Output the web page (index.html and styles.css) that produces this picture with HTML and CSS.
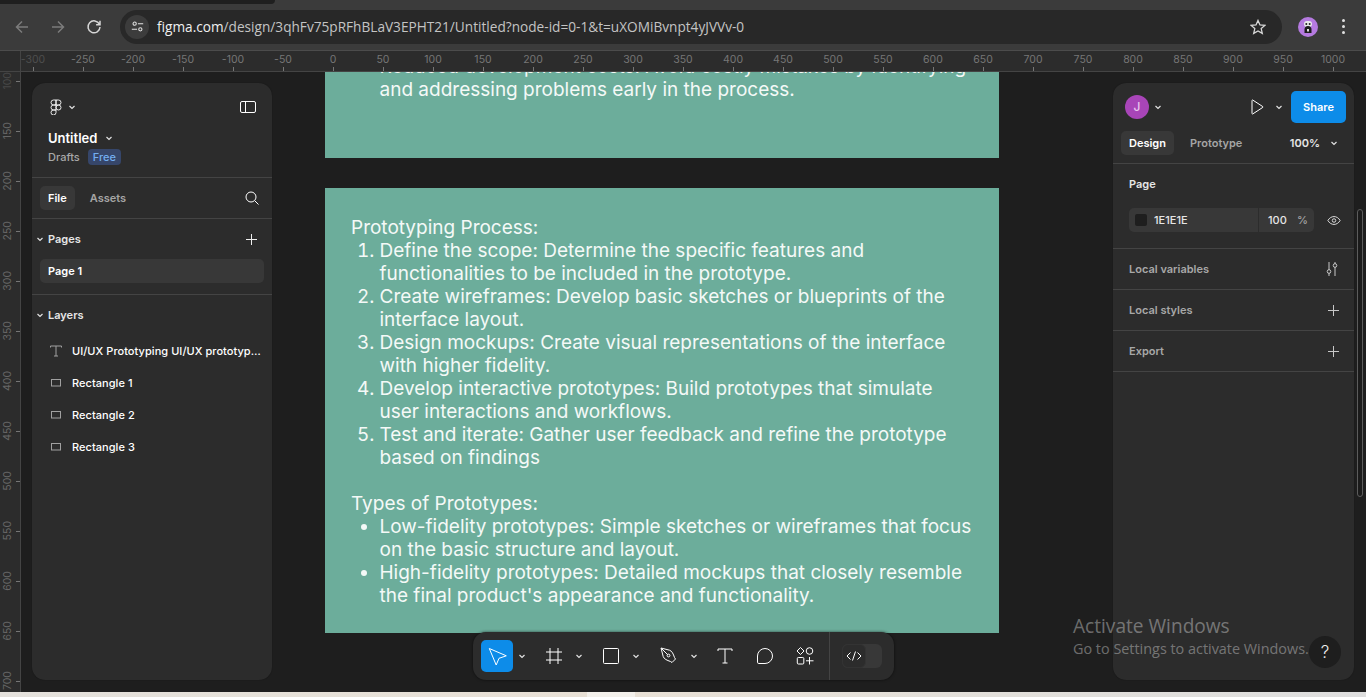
FILE: index.html
```html
<!DOCTYPE html>
<html lang="en">
<head>
    <meta charset="utf-8">
    <title>Untitled - Figma</title>
    <link rel="stylesheet" href="styles.css">
</head>
<body>
    <div class="tabstrip"><div class="tab-edge"></div></div>

    <!-- Browser toolbar -->
    <div class="chrome">
        <svg class="nav-icon dim" viewBox="0 0 16 16"><path d="M14 8H2.5M8 2.5 2.5 8 8 13.5"/></svg>
        <svg class="nav-icon dim" viewBox="0 0 16 16"><path d="M2 8h11.5M8 2.5 13.5 8 8 13.5"/></svg>
        <svg class="nav-icon" viewBox="0 0 16 16"><path d="M13.4 5.2A6 6 0 1 0 14 8M14 1.8v3.9h-3.9"/></svg>
        <div class="omnibox">
            <div class="site-btn">
                <svg viewBox="0 0 16 16"><circle cx="4.5" cy="4.5" r="2"/><path d="M8.5 4.5H15M1 11.5h6.5"/><circle cx="11.5" cy="11.5" r="2"/></svg>
            </div>
            <span class="url"><span class="url-host">figma.com</span>/design/3qhFv75pRFhBLaV3EPHT21/Untitled?node-id=0-1&amp;t=uXOMiBvnpt4yJVVv-0</span>
            <svg class="star" viewBox="0 0 16 16"><path d="m8 1.4 2 4.5 4.9.5-3.7 3.2 1.1 4.8L8 11.9l-4.3 2.5 1.1-4.8L1.1 6.4 6 5.900z"/></svg>
        </div>
        <div class="profile">
            <svg viewBox="0 0 20 20"><circle cx="10" cy="10" r="10" fill="#b57ae0" stroke="none"/><rect x="6" y="4" width="8" height="6" rx="3" fill="#e8e8e8" stroke="none"/><circle cx="8.3" cy="7" r="1" fill="#222" stroke="none"/><circle cx="11.7" cy="7" r="1" fill="#222" stroke="none"/><path d="M6.5 16v-3.5a3.5 3.5 0 0 1 7 0V16z" fill="#1c1c1c" stroke="none"/><rect x="9" y="12" width="2" height="2.5" fill="#ddd" stroke="none"/></svg>
        </div>
        <div class="kebab"><i></i><i></i><i></i></div>
    </div>

    <div class="workspace">
        <div class="ruler-x">
            <div class="ruler-corner"></div>
            <div class="ruler-x-clip">
                <div class="ruler-x-track">
                    <span class="tick-x faint">-300</span>
                    <span class="tick-x">-250</span>
                    <span class="tick-x">-200</span>
                    <span class="tick-x">-150</span>
                    <span class="tick-x">-100</span>
                    <span class="tick-x">-50</span>
                    <span class="tick-x">0</span>
                    <span class="tick-x">50</span>
                    <span class="tick-x">100</span>
                    <span class="tick-x">150</span>
                    <span class="tick-x">200</span>
                    <span class="tick-x">250</span>
                    <span class="tick-x">300</span>
                    <span class="tick-x">350</span>
                    <span class="tick-x">400</span>
                    <span class="tick-x">450</span>
                    <span class="tick-x">500</span>
                    <span class="tick-x">550</span>
                    <span class="tick-x">600</span>
                    <span class="tick-x">650</span>
                    <span class="tick-x">700</span>
                    <span class="tick-x">750</span>
                    <span class="tick-x">800</span>
                    <span class="tick-x">850</span>
                    <span class="tick-x">900</span>
                    <span class="tick-x">950</span>
                    <span class="tick-x">1000</span>
                </div>
            </div>
        </div>

        <div class="stage">
            <div class="ruler-y">
                <div class="ruler-y-track">
                    <span class="tick-y faint"><b>100</b></span>
                    <span class="tick-y"><b>150</b></span>
                    <span class="tick-y"><b>200</b></span>
                    <span class="tick-y"><b>250</b></span>
                    <span class="tick-y"><b>300</b></span>
                    <span class="tick-y"><b>350</b></span>
                    <span class="tick-y"><b>400</b></span>
                    <span class="tick-y"><b>450</b></span>
                    <span class="tick-y"><b>500</b></span>
                    <span class="tick-y"><b>550</b></span>
                    <span class="tick-y"><b>600</b></span>
                    <span class="tick-y"><b>650</b></span>
                    <span class="tick-y"><b>700</b></span>
                </div>
            </div>

            <!-- Canvas frames -->
            <div class="canvas">
                <div class="frame frame-top">
                    <ul class="frame-list">
                        <li class="no-dot">Reduced development costs: Avoid costly mistakes by identifying and addressing problems early in the process.</li>
                    </ul>
                </div>
                <div class="frame frame-main">
                    <p>Prototyping Process:</p>
                    <ol class="frame-list">
                        <li>Define the scope: Determine the specific features and functionalities to be included in the prototype.</li>
                        <li>Create wireframes: Develop basic sketches or blueprints of the interface layout.</li>
                        <li>Design mockups: Create visual representations of the interface with higher fidelity.</li>
                        <li>Develop interactive prototypes: Build prototypes that simulate user interactions and workflows.</li>
                        <li>Test and iterate: Gather user feedback and refine the prototype based on findings</li>
                    </ol>
                    <p class="gap-above">Types of Prototypes:</p>
                    <ul class="frame-list">
                        <li>Low-fidelity prototypes: Simple sketches or wireframes that focus on the basic structure and layout.</li>
                        <li>High-fidelity prototypes: Detailed mockups that closely resemble the final product's appearance and functionality.</li>
                    </ul>
                </div>
            </div>
        </div>

        <!-- Left panel -->
        <aside class="panel panel-left">
            <div class="file-head">
                <div class="row-between logo-row">
                    <div class="logo-wrap">
                        <svg class="figma-logo" viewBox="0 0 12 16"><path d="M6 1H3.5a2.5 2.5 0 0 0 0 5H6zM6 1h2.5a2.5 2.5 0 0 1 0 5H6zM6 6H3.5a2.5 2.5 0 0 0 0 5H6zM11 8.5a2.5 2.5 0 1 1-5 0 2.5 2.5 0 0 1 5 0zM6 11H3.5A2.5 2.5 0 1 0 6 13.5z"/></svg>
                        <svg class="chev" viewBox="0 0 8 8"><path d="m1.5 3 2.5 2.5L6.5 3"/></svg>
                    </div>
                    <svg class="icon16" viewBox="0 0 16 12"><rect x=".5" y=".5" width="15" height="11" rx="1.5"/><path d="M5.5 .5v11"/></svg>
                </div>
                <div class="file-name">Untitled <svg class="chev" viewBox="0 0 8 8"><path d="m1.5 3 2.5 2.5L6.5 3"/></svg></div>
                <div class="file-meta"><span>Drafts</span><span class="badge">Free</span></div>
            </div>
            <div class="tabs-row row-between">
                <div class="tabs tabs-left">
                    <span class="tab active">File</span>
                    <span class="tab">Assets</span>
                </div>
                <svg class="icon16 search" viewBox="0 0 14 14"><circle cx="6" cy="6" r="5"/><path d="m9.7 9.7 3.800 3.800"/></svg>
            </div>
            <div class="section section-pages">
                <div class="section-head row-between">
                    <span class="section-title"><svg class="chev" viewBox="0 0 8 8"><path d="m1.5 3 2.5 2.5L6.5 3"/></svg>Pages</span>
                    <svg class="plus" viewBox="0 0 11 11"><path d="M5.5 0v11M0 5.5h11"/></svg>
                </div>
                <div class="page-item">Page 1</div>
            </div>
            <div class="layers">
                <div class="section-head row-between">
                    <span class="section-title"><svg class="chev" viewBox="0 0 8 8"><path d="m1.5 3 2.5 2.5L6.5 3"/></svg>Layers</span>
                </div>
                <div class="layer-list">
                    <div class="layer">
                        <svg class="layer-icon" viewBox="0 0 12 12"><path d="M.5 2.5V1h11v1.500M6 1v10M4 11h4"/></svg>
                        <span class="layer-name">UI/UX Prototyping UI/UX prototyping is a crucial step</span>
                    </div>
                    <div class="layer">
                        <svg class="layer-icon" viewBox="0 0 12 12"><rect x="1.5" y="2.5" width="9" height="6.5"/></svg>
                        <span class="layer-name">Rectangle 1</span>
                    </div>
                    <div class="layer">
                        <svg class="layer-icon" viewBox="0 0 12 12"><rect x="1.5" y="2.5" width="9" height="6.5"/></svg>
                        <span class="layer-name">Rectangle 2</span>
                    </div>
                    <div class="layer">
                        <svg class="layer-icon" viewBox="0 0 12 12"><rect x="1.5" y="2.5" width="9" height="6.5"/></svg>
                        <span class="layer-name">Rectangle 3</span>
                    </div>
                </div>
            </div>
        </aside>

        <!-- Right panel -->
        <aside class="panel panel-right">
            <div class="top-row row-between">
                <div class="logo-wrap">
                    <span class="user-dot">J</span>
                    <svg class="chev" viewBox="0 0 8 8"><path d="m1.5 3 2.5 2.5L6.5 3"/></svg>
                </div>
                <div class="share-wrap">
                    <svg class="play" viewBox="0 0 14 16"><path d="M2 1.5v13a.5.5 0 0 0 .8.4l10-6.5a.5.5 0 0 0 0-.8l-10-6.5a.5.5 0 0 0-.8.4z"/></svg>
                    <svg class="chev" viewBox="0 0 8 8"><path d="m1.5 3 2.5 2.5L6.5 3"/></svg>
                    <span class="share-btn">Share</span>
                </div>
            </div>
            <div class="tabs-row-right row-between">
                <div class="tabs">
                    <span class="tab active">Design</span>
                    <span class="tab">Prototype</span>
                </div>
                <div class="zoom-val">100% <svg class="chev" viewBox="0 0 8 8"><path d="m1.5 3 2.5 2.5L6.5 3"/></svg></div>
            </div>
            <div class="page-props">
                <div class="props-title">Page</div>
                <div class="fill-row">
                    <div class="fill-field">
                        <div class="fill-color"><span class="swatch"></span>1E1E1E</div>
                        <div class="fill-opacity"><span>100</span><span class="pct">%</span></div>
                    </div>
                    <svg class="eye" viewBox="0 0 16 12"><path d="M1 6c3.5-6 10.5-6 14 0-3.5 6-10.5 6-14 0z"/><circle cx="8" cy="6" r="2"/></svg>
                </div>
            </div>
            <div class="prop-row row-between">
                <span>Local variables</span>
                <svg class="sliders" viewBox="0 0 14 16"><path d="M4 1v8M4 12v3M10 1v2M10 6v9"/><circle cx="4" cy="10.5" r="1.8"/><circle cx="10" cy="4.5" r="1.8"/></svg>
            </div>
            <div class="prop-row row-between">
                <span>Local styles</span>
                <svg class="plus" viewBox="0 0 11 11"><path d="M5.5 0v11M0 5.5h11"/></svg>
            </div>
            <div class="prop-row row-between">
                <span>Export</span>
                <svg class="plus" viewBox="0 0 11 11"><path d="M5.5 0v11M0 5.5h11"/></svg>
            </div>
        </aside>

        <div class="panel-scroll"></div>

        <!-- Bottom tools -->
        <div class="toolbar">
            <span class="tool tool-on">
                <svg viewBox="0 0 20 20"><path d="M2.3 2.5 19.3 9.8 12 12.3 9.2 19z"/></svg>
            </span>
            <svg class="chev tool-chev" viewBox="0 0 8 8"><path d="m1.5 3 2.5 2.5L6.5 3"/></svg>
            <span class="tool tool-frame">
                <svg viewBox="0 0 20 20"><path d="M6 2v16M14 2v16M2 6h16M2 14h16"/></svg>
            </span>
            <svg class="chev tool-chev" viewBox="0 0 8 8"><path d="m1.5 3 2.5 2.5L6.5 3"/></svg>
            <span class="tool tool-rect">
                <svg viewBox="0 0 20 20"><rect x="2.5" y="2.5" width="15" height="15" rx="1"/></svg>
            </span>
            <svg class="chev tool-chev" viewBox="0 0 8 8"><path d="m1.5 3 2.5 2.5L6.5 3"/></svg>
            <span class="tool tool-pen">
                <svg viewBox="0 0 20 20"><path d="M2 2 10.5 4.2c2.5 .7 3.8 3.8 5 7.3l1 1.5-3.5 3.5-1.5-1c-3.5-1.2-6.600-2.5-7.300-5zM2.3 2.3 8.8 8.8"/><circle cx="9.5" cy="9.5" r="1.4"/></svg>
            </span>
            <svg class="chev tool-chev" viewBox="0 0 8 8"><path d="m1.5 3 2.5 2.5L6.5 3"/></svg>
            <span class="tool tool-text">
                <svg viewBox="0 0 20 20"><path d="M3 5V3h14v2M10 3v14M7.5 17h5"/></svg>
            </span>
            <span class="tool tool-bubble">
                <svg viewBox="0 0 20 20"><path d="M10 2.5a7.5 7.5 0 1 1 0 15H3.8a1.3 1.3 0 0 1-1.300-1.300V10A7.5 7.5 0 0 1 10 2.500z"/></svg>
            </span>
            <span class="tool tool-widgets">
                <svg viewBox="0 0 20 20"><path d="m5.5 1.5 3.5 3.5-3.5 3.5L2 5z"/><circle cx="14.5" cy="5" r="3.3"/><rect x="2.3" y="11.5" width="6.5" height="6.5" rx="1"/><path d="M14.5 11v7.5M11 14.8h7.5"/></svg>
            </span>
            <div class="dev-wrap">
                <div class="dev-toggle">
                    <span class="dev-knob">
                        <svg viewBox="0 0 16 12"><path d="M4.5 2.5 1 6l3.5 3.5M11.5 2.5 15 6l-3.5 3.500M9.500 1.500l-3 9"/></svg>
                    </span>
                </div>
            </div>
        </div>

        <div class="activate">
            <div class="activate-title">Activate Windows</div>
            <div class="activate-sub">Go to Settings to activate Windows.</div>
        </div>
        <div class="help">?</div>
    </div>

    <div class="taskbar-edge"></div>
</body>
</html>
```

FILE: styles.css
```css
* {
    box-sizing: border-box;
}

html, body {
    margin: 0;
    height: 697px;
    overflow: hidden;
}

body {
    background-color: #1e1e1e;
    font-family: "Inter", "Liberation Sans", sans-serif;
    font-size: 11px;
    color: #fff;
}

svg {
    display: block;
    fill: none;
    stroke: currentColor;
    flex: none;
}

.row-between {
    display: flex;
    align-items: center;
    justify-content: space-between;
}

/* Browser */
.tabstrip {
    height: 4px;
    background-color: #3b3b3b;
}

.tab-edge {
    width: 275px;
    height: 4px;
    background-color: #1f1f1f;
    border-bottom-right-radius: 6px;
}

.chrome {
    height: 47px;
    display: flex;
    align-items: center;
    background-color: #3b3b3b;
    border-bottom: 1px solid #4c4c4c;
    padding-left: 14px;
    padding-bottom: 1px;
}

.nav-icon {
    width: 16px;
    height: 16px;
    margin-right: 20px;
    stroke: #d6d6d6;
    stroke-width: 1.5;
}

.nav-icon.dim {
    stroke: #7c7c7c;
}

.omnibox {
    width: 1162px;
    height: 34px;
    margin-left: -2px;
    display: flex;
    align-items: center;
    background-color: #282828;
    border-radius: 17px;
    padding: 0 16px 0 5px;
}

.site-btn {
    width: 24px;
    height: 24px;
    border-radius: 50%;
    background-color: #3c3c3c;
    display: flex;
    align-items: center;
    justify-content: center;
    color: #e4e4e4;
}

.site-btn svg {
    width: 13px;
    height: 13px;
    stroke-width: 1.3;
}

.url {
    flex: 1;
    margin-left: 8px;
    font-family: "Open Sans", "Noto Sans", sans-serif;
    font-size: 13.65px;
    color: #c4c4c4;
    white-space: nowrap;
}

.url-host {
    color: #f0f0f0;
}

.star {
    width: 16px;
    height: 16px;
    color: #d8d8d8;
    stroke-width: 1.3;
}

.profile {
    margin-left: 16px;
    width: 20px;
    height: 20px;
}

.kebab {
    margin-left: 24px;
    display: flex;
    flex-direction: column;
    gap: 3px;
}

.kebab i {
    width: 3px;
    height: 3px;
    border-radius: 50%;
    background-color: #e0e0e0;
}

/* Workspace */
.workspace {
    position: relative;
    height: 641px;
    overflow: hidden;
}

.ruler-x {
    height: 21px;
    display: flex;
    background-color: #2c2c2c;
    border-bottom: 1px solid #444;
}

.ruler-corner {
    width: 21px;
    flex: none;
    border-right: 1px solid #444;
}

.ruler-x-clip {
    flex: 1;
    overflow: hidden;
}

.ruler-x-track {
    display: flex;
    margin-left: -13px;
}

.tick-x {
    width: 50px;
    height: 20px;
    flex: none;
    position: relative;
    text-align: center;
    font-size: 10.5px;
    line-height: 18px;
    color: #767676;
}

.tick-x::after {
    content: "";
    position: absolute;
    left: 25px;
    bottom: 0;
    width: 1px;
    height: 4px;
    background-color: #767676;
}

.faint {
    color: #4e4e4e;
}

.stage {
    display: flex;
    height: 620px;
}

.ruler-y {
    width: 21px;
    flex: none;
    background-color: #2c2c2c;
    border-right: 1px solid #444;
    overflow: hidden;
}

.ruler-y-track {
    margin-top: -16px;
}

.tick-y {
    height: 50px;
    position: relative;
    display: flex;
    align-items: center;
    width: 16px;
    color: #666;
    font-size: 10.5px;
}

.tick-y b {
    font-weight: 400;
    writing-mode: vertical-rl;
    transform: rotate(180deg);
    margin-left: 2px;
    line-height: 12px;
}

.tick-y::after {
    content: "";
    position: absolute;
    left: 16px;
    top: 25px;
    width: 4px;
    height: 1px;
    background-color: #767676;
}

.tick-y.faint {
    color: #484848;
}

.canvas {
    flex: 1;
    padding-left: 304px;
    overflow: hidden;
    background-color: #1e1e1e;
}

.frame {
    width: 674px;
    background-color: #6cad9b;
    color: #f4f9f7;
    font-size: 19px;
    line-height: 23px;
    padding: 0 26px;
}

.frame p {
    margin: 0;
}

.frame-top {
    margin-top: -17px;
    height: 103px;
}

.frame-main {
    margin-top: 30px;
    padding-top: 28px;
    padding-bottom: 26px;
}

.frame-list {
    margin: 0;
    padding-left: 28.5px;
}

.no-dot {
    list-style: none;
}

.frame .gap-above {
    margin-top: 23px;
}

/* Panels */
.panel {
    position: absolute;
    top: 32px;
    height: 597px;
    background-color: #2c2c2c;
    border-radius: 13px;
    box-shadow: 0 0 1px rgba(0, 0, 0, .5);
    font-weight: 500;
}

.panel-left {
    left: 32px;
    width: 240px;
}

.panel-right {
    left: 1113px;
    width: 241px;
}

.file-head {
    height: 95px;
    padding: 14px 16px 0;
    border-bottom: 1px solid #444;
}

.logo-wrap {
    display: flex;
    align-items: center;
    gap: 6px;
}

.logo-row {
    height: 20px;
}

.figma-logo {
    width: 12px;
    height: 16px;
    stroke-width: .9;
    margin-left: 2px;
}

.chev {
    width: 8px;
    height: 8px;
    color: #e2e2e2;
    stroke-width: 1.2;
}

.icon16 {
    width: 16px;
    height: 12px;
    stroke-width: 1;
}

.search {
    width: 14px;
    height: 14px;
}

.file-name {
    margin-top: 13px;
    display: flex;
    align-items: center;
    gap: 8px;
    font-size: 13px;
    font-weight: 600;
    line-height: 16px;
}

.file-meta {
    margin-top: 3px;
    display: flex;
    align-items: center;
    gap: 8px;
    color: #a8a8a8;
}

.badge {
    height: 16px;
    padding: 0 5px;
    line-height: 16px;
    border-radius: 4px;
    background-color: #36466a;
    color: #73aef0;
}

.tabs-row {
    height: 41px;
    padding: 0 13px 0 8px;
    border-bottom: 1px solid #444;
}

.tabs {
    display: flex;
    gap: 8px;
}

.tabs-left {
    gap: 7px;
}

.tab {
    height: 24px;
    line-height: 24px;
    padding: 0 8px;
    border-radius: 5px;
    color: #a5a5a5;
    font-weight: 600;
}

.tab.active {
    background-color: #383838;
    color: #fff;
}

.section-pages {
    height: 76px;
    border-bottom: 1px solid #444;
}

.section-head {
    height: 40px;
    padding: 0 15px 0 4px;
}

.section-title {
    display: flex;
    align-items: center;
    font-weight: 600;
    color: #e6e6e6;
}

.section-title .chev {
    margin-right: 4px;
}

.plus {
    width: 11px;
    height: 11px;
    stroke-width: 1;
    color: #eee;
    shape-rendering: crispEdges;
}

.page-item {
    margin: 0 8px;
    height: 24px;
    line-height: 24px;
    padding-left: 8px;
    border-radius: 5px;
    background-color: #383838;
    font-weight: 600;
}

.layer {
    height: 32px;
    display: flex;
    align-items: center;
    padding-left: 18px;
}

.layer-icon {
    width: 12px;
    height: 12px;
    stroke-width: 1;
    color: #a0a0a0;
}

.layer-name {
    margin-left: 10px;
    width: 189px;
    font-weight: 450;
    letter-spacing: .05px;
    white-space: nowrap;
    overflow: hidden;
    text-overflow: ellipsis;
}

.top-row {
    height: 48px;
    padding: 0 8px 0 12px;
}

.user-dot {
    width: 24px;
    height: 24px;
    border-radius: 50%;
    background-color: #a845b8;
    color: #e8c8ee;
    text-align: center;
    line-height: 24px;
    font-size: 12px;
}

.top-row .logo-wrap {
    gap: 5px;
}

.share-wrap {
    display: flex;
    align-items: center;
}

.play {
    width: 14px;
    height: 16px;
    stroke-width: 1;
}

.share-wrap .chev {
    margin: 0 8px 0 11px;
}

.share-btn {
    width: 55px;
    height: 32px;
    line-height: 32px;
    text-align: center;
    border-radius: 5px;
    background-color: #0d8ce9;
    font-weight: 600;
}

.tabs-row-right {
    height: 33px;
    padding: 0 16px 9px 8px;
    border-bottom: 1px solid #444;
    align-items: center;
}

.zoom-val {
    display: flex;
    align-items: center;
    gap: 10px;
    font-weight: 600;
    color: #e6e6e6;
}

.page-props {
    height: 85px;
    padding: 13px 13px 0 16px;
    border-bottom: 1px solid #444;
}

.props-title {
    font-weight: 600;
    color: #e6e6e6;
    line-height: 14px;
}

.fill-row {
    margin-top: 17px;
    display: flex;
    align-items: center;
    justify-content: space-between;
}

.fill-field {
    width: 185px;
    height: 24px;
    display: flex;
    border-radius: 5px;
    background-color: #383838;
    color: #e6e6e6;
}

.fill-color {
    width: 130px;
    display: flex;
    align-items: center;
    gap: 7px;
    padding-left: 6px;
    border-right: 1px solid #2c2c2c;
}

.swatch {
    width: 12px;
    height: 12px;
    border-radius: 2px;
    background-color: #1e1e1e;
}

.fill-opacity {
    flex: 1;
    display: flex;
    align-items: center;
    justify-content: space-between;
    padding: 0 6px 0 9px;
}

.pct {
    color: #a5a5a5;
}

.eye {
    width: 14px;
    height: 11px;
    stroke-width: 1.1;
    color: #e0e0e0;
}

.prop-row {
    height: 41px;
    padding: 0 15px 0 16px;
    border-bottom: 1px solid #444;
    color: #a8a8a8;
    font-weight: 600;
}

.prop-row .plus {
    color: #c8c8c8;
}

.sliders {
    width: 14px;
    height: 16px;
    stroke-width: 1;
    color: #c8c8c8;
}

.panel-scroll {
    position: absolute;
    left: 1357px;
    top: 158px;
    width: 6px;
    height: 288px;
    border: 1px solid #5c5c5c;
    border-radius: 3px;
    background-color: #1b1b1b;
}

/* Bottom tools */
.toolbar {
    position: absolute;
    left: 473px;
    top: 581px;
    width: 421px;
    height: 48px;
    display: flex;
    align-items: center;
    padding-left: 8px;
    background-color: #2c2c2c;
    border-radius: 13px;
    box-shadow: 0 0 3px rgba(0, 0, 0, .6);
}

.tool {
    width: 32px;
    height: 32px;
    flex: none;
    display: flex;
    align-items: center;
    justify-content: center;
    border-radius: 5px;
}

.tool svg {
    width: 20px;
    height: 20px;
    stroke-width: 1;
}

.tool-on {
    background-color: #0d8ce9;
}

.tool-chev {
    margin-left: 5px;
}

.tool-frame {
    margin-left: 12px;
}

.tool-rect {
    margin-left: 12px;
}

.tool-pen {
    margin-left: 13px;
}

.tool-text {
    margin-left: 11px;
}

.tool-bubble {
    margin-left: 8px;
}

.tool-widgets {
    margin-left: 8px;
}

.dev-wrap {
    margin-left: 8px;
    height: 48px;
    padding-left: 12px;
    display: flex;
    align-items: center;
    border-left: 1px solid #444;
}

.dev-toggle {
    width: 40px;
    height: 24px;
    border-radius: 6px;
    background-color: #383838;
}

.dev-knob {
    width: 24px;
    height: 24px;
    display: flex;
    align-items: center;
    justify-content: center;
    border-radius: 6px;
    background-color: #2c2c2c;
    border: 1px solid #333;
}

.dev-knob svg {
    width: 16px;
    height: 12px;
    stroke-width: 1;
}

/* Windows watermark */
.activate {
    position: absolute;
    left: 1073px;
    top: 563px;
    font-family: "Open Sans", "Noto Sans", sans-serif;
    color: rgba(255, 255, 255, .36);
    pointer-events: none;
}

.activate-title {
    font-size: 19.1px;
    line-height: 25px;
}

.activate-sub {
    font-size: 14.4px;
    line-height: 20px;
}

.help {
    position: absolute;
    left: 1309px;
    top: 585px;
    width: 32px;
    height: 32px;
    border-radius: 50%;
    background-color: #1e1e1e;
    text-align: center;
    line-height: 32px;
    font-size: 17px;
    font-weight: 300;
    color: #eee;
}

.taskbar-edge {
    height: 5px;
    background: linear-gradient(to right, #e4e1dc 0, #e8e0d5 587px, #f3f0eb 587px, #f3f0eb 635px, #e8e0d5 635px, #e2dfda 1000px, #dedede 1366px);
}
```
